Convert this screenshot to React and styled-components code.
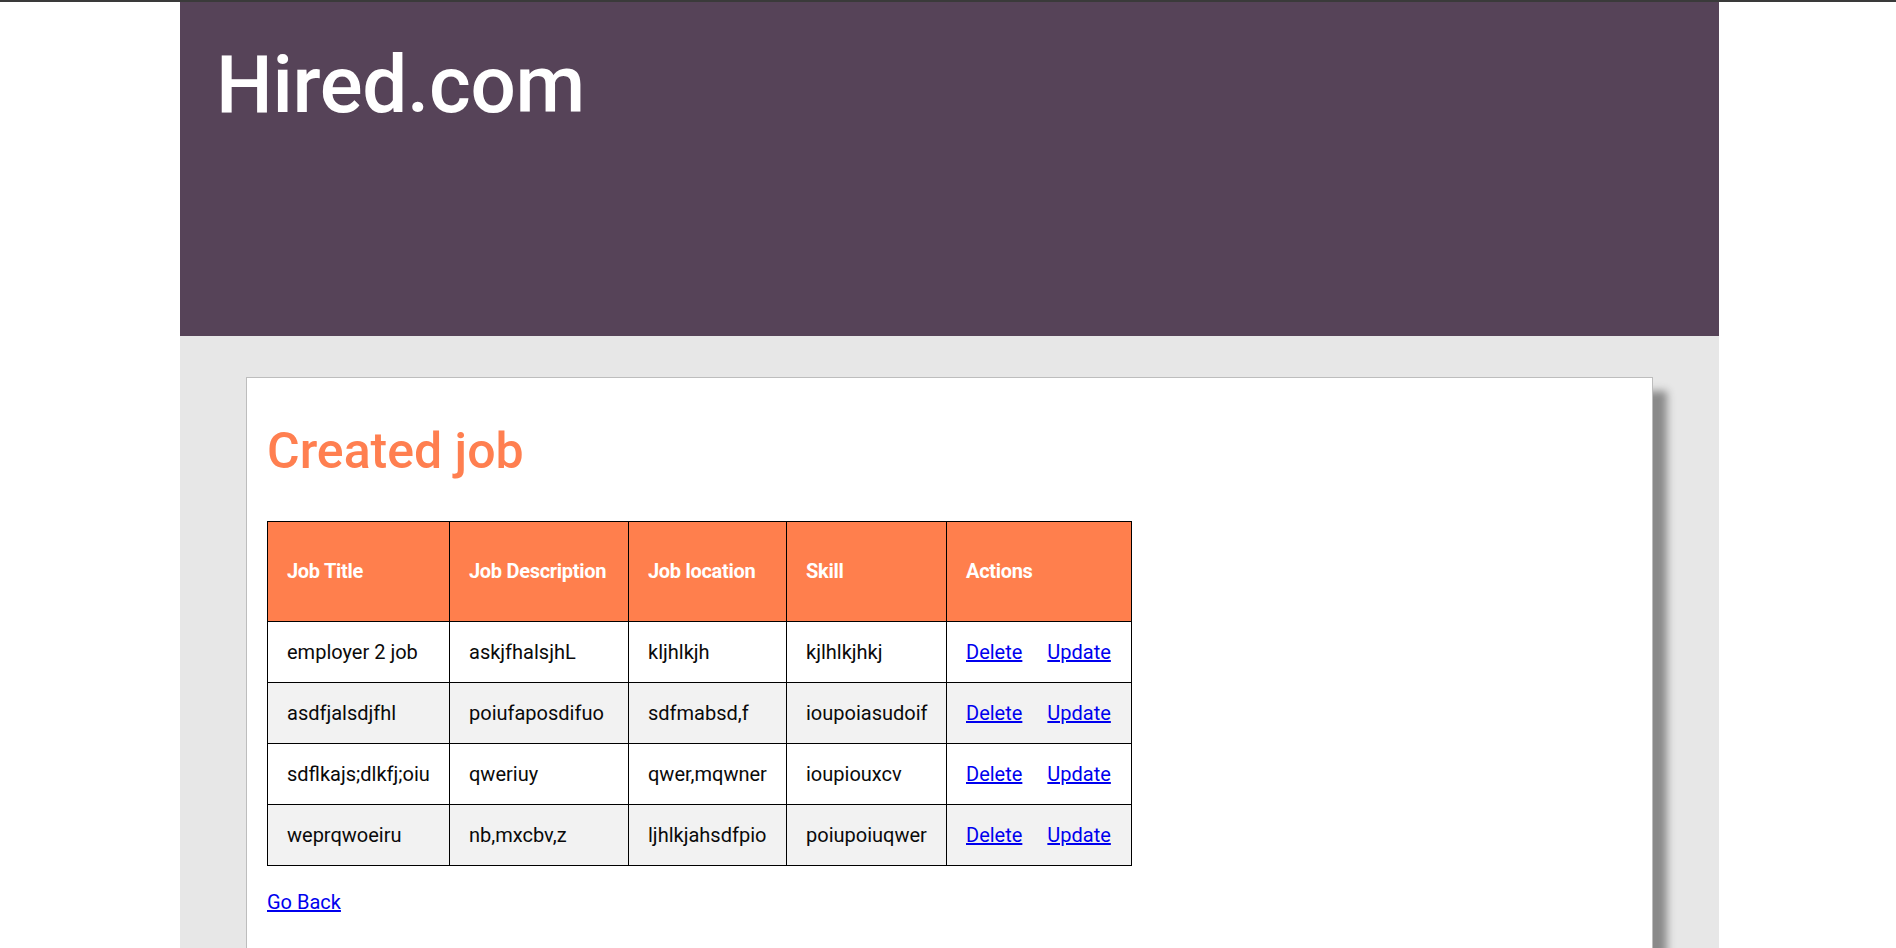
import React from "react";
import styled, { createGlobalStyle } from "styled-components";

const GlobalStyle = createGlobalStyle`
  html, body { margin: 0; padding: 0; background: #ffffff; }
  body {
    font-family: Roboto, "Noto Sans", "Liberation Sans", sans-serif;
    border-top: 2px solid #3a3a3a;
    overflow: hidden;
  }
`;

const Page = styled.div`
  width: 1539px;
  margin-left: 180px;
  min-height: 946px;
  background: #e7e7e7;
  display: flex;
  flex-direction: column;
`;

const Header = styled.header`
  background: #564358;
  height: 334px;
  padding: 0 0 0 36px;
  box-sizing: border-box;
`;

const Logo = styled.h1`
  margin: 0;
  padding-top: 36px;
  color: #ffffff;
  font-size: 80px;
  font-weight: 500;
  line-height: 94px;
  letter-spacing: -0.3px;
`;

const Main = styled.main`
  flex: 1;
  padding: 41px 66px 0 66px;
`;

const Card = styled.section`
  background: #ffffff;
  border: 1px solid #bdbdbd;
  box-shadow: 14px 14px 8px #8a8a8a;
  padding: 20px 20px 60px 20px;
  min-height: 600px;
`;

const Title = styled.h2`
  margin: 24px 0 41px 0;
  color: #ff7f50;
  font-size: 50px;
  font-weight: 500;
  line-height: 58px;
`;

const Table = styled.table`
  border-collapse: collapse;
  table-layout: fixed;
  width: 864px;
  font-size: 20px;
`;

const HeadCell = styled.th`
  background: #ff7f4d;
  color: #ffffff;
  font-weight: 700;
  text-align: left;
  border: 1px solid #000000;
  padding: 38px 19px;
  line-height: 23px;
  white-space: nowrap;
  letter-spacing: -0.3px;
`;

const Row = styled.tr`
  background: ${(p) => (p.$striped ? "#f2f2f2" : "#ffffff")};
`;

const Cell = styled.td`
  border: 1px solid #000000;
  padding: 18px 19px;
  line-height: 24px;
  color: #0a0a0a;
  white-space: nowrap;
`;

const ActionLink = styled.a`
  color: #0000ee;
  text-decoration: underline;
  cursor: pointer;
  margin-right: ${(p) => (p.$last ? "0" : "25px")};
`;

const BackLink = styled.a`
  display: inline-block;
  margin-top: 24px;
  font-size: 20px;
  line-height: 24px;
  color: #0000ee;
  text-decoration: underline;
`;

const columns = [
  { label: "Job Title", width: 182 },
  { label: "Job Description", width: 179 },
  { label: "Job location", width: 158 },
  { label: "Skill", width: 160 },
  { label: "Actions", width: 185 },
];

const jobs = [
  ["employer 2 job", "askjfhalsjhL", "kljhlkjh", "kjlhlkjhkj"],
  ["asdfjalsdjfhl", "poiufaposdifuo", "sdfmabsd,f", "ioupoiasudoif"],
  ["sdflkajs;dlkfj;oiu", "qweriuy", "qwer,mqwner", "ioupiouxcv"],
  ["weprqwoeiru", "nb,mxcbv,z", "ljhlkjahsdfpio", "poiupoiuqwer"],
];

export default function App() {
  return (
    <>
      <GlobalStyle />
      <Page>
        <Header>
          <Logo>Hired.com</Logo>
        </Header>
        <Main>
          <Card>
            <Title>Created job</Title>
            <Table>
              <colgroup>
                {columns.map((c) => (
                  <col key={c.label} style={{ width: c.width }} />
                ))}
              </colgroup>
              <thead>
                <tr>
                  {columns.map((c) => (
                    <HeadCell key={c.label}>{c.label}</HeadCell>
                  ))}
                </tr>
              </thead>
              <tbody>
                {jobs.map((job, i) => (
                  <Row key={i} $striped={i % 2 === 1}>
                    {job.map((v, j) => (
                      <Cell key={j}>{v}</Cell>
                    ))}
                    <Cell>
                      <ActionLink href="#">Delete</ActionLink>
                      <ActionLink href="#" $last>
                        Update
                      </ActionLink>
                    </Cell>
                  </Row>
                ))}
              </tbody>
            </Table>
            <BackLink href="#">Go Back</BackLink>
          </Card>
        </Main>
      </Page>
    </>
  );
}
